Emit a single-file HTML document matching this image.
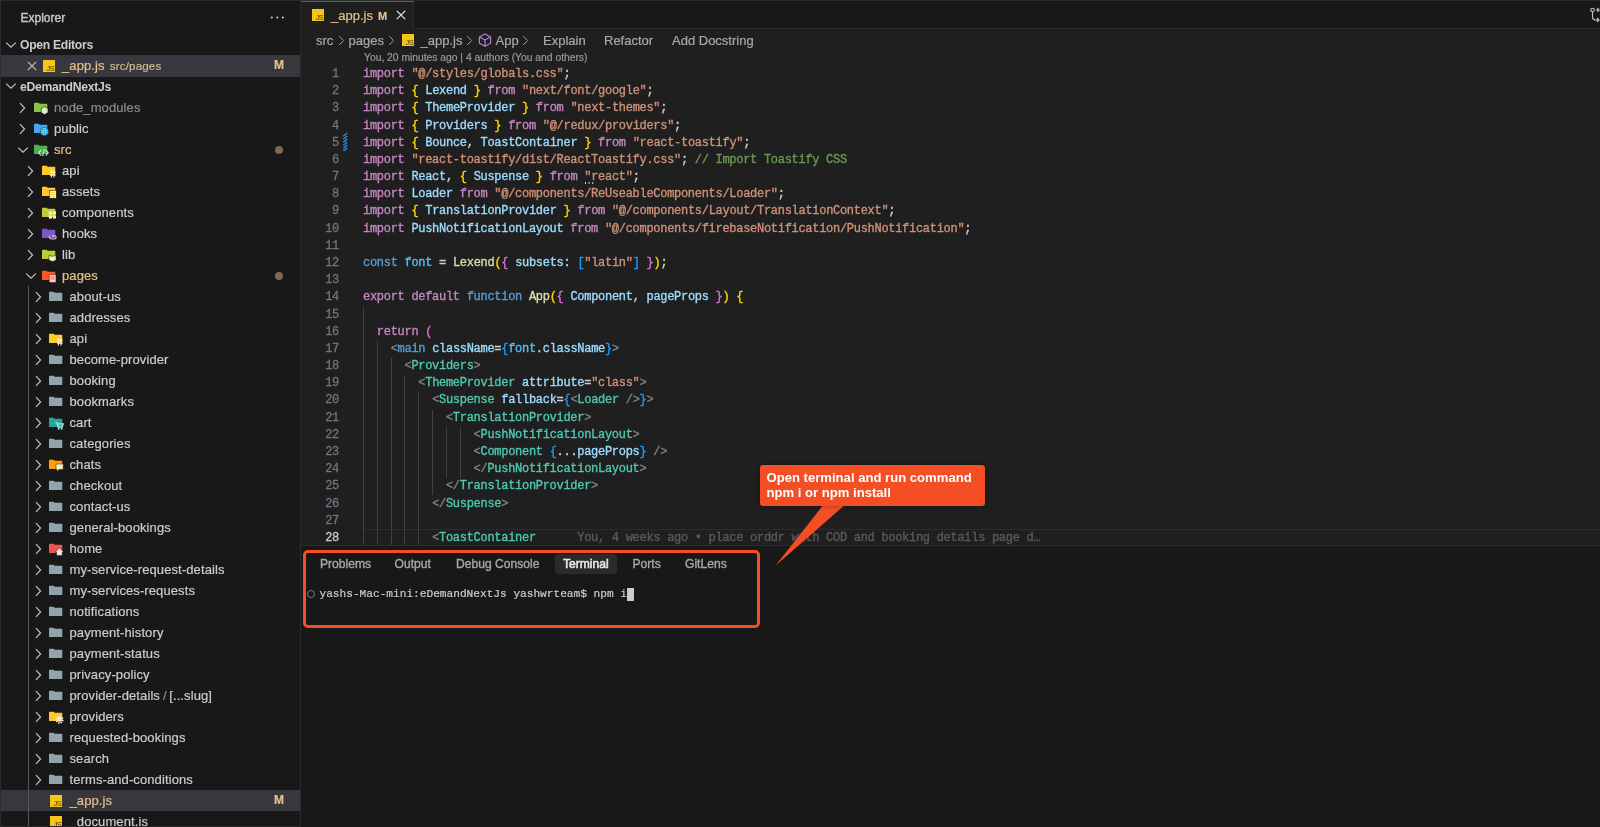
<!DOCTYPE html>
<html><head><meta charset="utf-8">
<style>
*{box-sizing:border-box;margin:0;padding:0}
html,body{width:1600px;height:827px;overflow:hidden;background:#181818;font-family:"Liberation Sans",sans-serif;-webkit-text-stroke:0.2px}
#sb{position:absolute;left:0;top:0;width:300px;height:827px;background:#181818;}
#sbl{position:absolute;left:0;top:0;width:1px;height:827px;background:#2b2b2b}
#sbb{position:absolute;left:300px;top:0;width:1px;height:827px;background:#2b2b2b}
.sb-title{position:absolute;left:20.5px;top:10px;font-size:12px;color:#cccccc;line-height:16px;-webkit-text-stroke:0.35px}
.sb-more{position:absolute;left:270px;top:9px;font-size:13px;color:#cccccc;letter-spacing:0px;font-weight:bold}
.row{position:absolute;left:0;width:300px;height:21px;}
.row.sel{background:#37373d}
.row .lbl{position:absolute;top:0px;line-height:21px;font-size:13px;color:#cccccc;white-space:nowrap;letter-spacing:0.1px}
.row.hdr .lbl, .row .hdr2{font-weight:bold;color:#cccccc;font-size:12.2px;letter-spacing:-0.3px;-webkit-text-stroke:0}
.lbl.mod{color:#e2c08d}
.lbl.dim{color:#8c8c8c}
.desc{font-size:11.7px;color:#d4b98a;margin-left:1.5px}
.sep{color:#8c8c8c;margin:0 2.5px 0 3px}
.chev{position:absolute;line-height:0}
.ic{position:absolute;line-height:0}
.x{position:absolute;top:0;line-height:21px;font-size:11px;color:#c5c5c5}
.M{position:absolute;left:274px;top:0;line-height:21px;font-size:12px;color:#e2c08d;font-weight:bold}
.dot{position:absolute;left:274.5px;top:6.5px;width:8px;height:8px;border-radius:50%;background:#7d6a4f}
.guide{position:absolute;width:1px;background:#585858}
#tabs{position:absolute;left:301px;top:0;width:1299px;height:29px;background:#181818;border-top:1px solid #2b2b2b;border-bottom:1px solid #2b2b2b}
#tab{position:absolute;left:301px;top:0;width:113px;height:29px;background:#1f1f1f;border-top:1px solid #2b2b2b;border-right:1px solid #2b2b2b}
#tabb{position:absolute;left:301px;top:1px;width:113px;height:1.2px;background:#0078d4}
#editor{position:absolute;left:301px;top:29px;width:1299px;height:516px;background:#1f1f1f}
.abs{position:absolute;white-space:nowrap}
.bc{font-size:13px;color:#a9a9a9;line-height:17px}
.ln{position:absolute;left:301px;width:38px;text-align:right;font-family:"Liberation Mono",monospace;font-size:12px;letter-spacing:-0.29px;line-height:17.18px;color:#6e7681;-webkit-text-stroke:0.3px}
.ln.act{color:#cccccc}
.cl{position:absolute;left:363px;font-family:"Liberation Mono",monospace;font-size:12px;letter-spacing:-0.29px;line-height:17.18px;white-space:pre;color:#cccccc;-webkit-text-stroke:0.35px}
.kw{color:#c586c0} .str{color:#ce9178} .var{color:#9cdcfe} .pun{color:#cccccc}
.b1{color:#ffd700} .b2{color:#da70d6} .b3{color:#179fff} .sto{color:#569cd6} .fn{color:#dcdcaa}
.tag{color:#4ec9b0} .cst{color:#4fc1ff} .gry{color:#808080} .cmt{color:#6a9955} .wht{color:#cccccc}
.blame{color:#5a5a5a}
.ig{position:absolute;width:1px;background:#404040}
#curline{position:absolute;left:363px;top:528.5px;width:1237px;height:17.5px;border-top:1.3px solid #2c2c2c;border-bottom:1px solid #2c2c2c}
#panel{position:absolute;left:301px;top:545px;width:1299px;height:282px;background:#181818;border-top:1.5px solid #2d2d2d}
.ptab{position:absolute;top:557px;font-size:12.1px;color:#a8a8a8;line-height:14px;-webkit-text-stroke:0.35px}
#ptact{position:absolute;left:555px;top:554px;width:62px;height:20px;background:#2b2b2b;border-radius:4px}
.term{position:absolute;left:319.5px;top:586px;font-family:"Liberation Mono",monospace;font-size:11.15px;line-height:16px;color:#cccccc;white-space:pre}
#annot{position:absolute;left:302.5px;top:550px;width:457px;height:78px;border:3.4px solid #f34e24;border-radius:5px}
#callout{position:absolute;left:760px;top:464.5px;width:225px;height:41px;background:#f34e24;border-radius:3px;box-shadow:0 0 4px rgba(0,0,0,0.35)}
.ctext{position:absolute;left:766.5px;top:469.5px;font-size:13.1px;line-height:15.5px;color:#ffffff;font-weight:bold;white-space:nowrap;-webkit-text-stroke:0}
</style></head><body><div id="root" style="position:absolute;left:0;top:0;width:1600px;height:827px;will-change:transform;background:#181818">
<div id="sb"><div class="sb-title">Explorer</div><svg style="position:absolute;left:268px;top:14px" width="18" height="6" viewBox="0 0 18 6"><circle cx="3.8" cy="3.5" r="1.05" fill="#cccccc"/><circle cx="9.3" cy="3.5" r="1.05" fill="#cccccc"/><circle cx="14.8" cy="3.5" r="1.05" fill="#cccccc"/></svg><div class="row hdr" style="top:34.5px"><span class="chev" style="left:5px;top:6px"><svg width="12" height="8" viewBox="0 0 12 8"><path d="M1.2 1.6 L6 6.2 L10.8 1.6" fill="none" stroke="#c5c5c5" stroke-width="1.15"/></svg></span><span class="lbl" style="left:20px">Open Editors</span></div><div class="row sel" style="top:55px;height:21.6px"><span class="ic" style="left:26.5px;top:6px"><svg width="10" height="10" viewBox="0 0 10 10"><path d="M0.8 0.8 L9.2 9.2 M9.2 0.8 L0.8 9.2" stroke="#c5c5c5" stroke-width="1.1"/></svg></span><span class="ic" style="left:43px;top:4.5px"><svg width="12" height="12" viewBox="0 0 12 12"><rect x="0" y="0" width="12" height="12" fill="#f5c518"/><text x="11.4" y="11.2" font-family="Liberation Sans" font-size="7.4" fill="#4a3a00" text-anchor="end" letter-spacing="-0.4" style="-webkit-text-stroke:0">JS</text></svg></span><span class="lbl mod" style="left:62px">_app.js <span class="desc">src/pages</span></span><span class="M">M</span></div><div class="row" style="top:76px"><span class="chev" style="left:5px;top:6px"><svg width="12" height="8" viewBox="0 0 12 8"><path d="M1.2 1.6 L6 6.2 L10.8 1.6" fill="none" stroke="#c5c5c5" stroke-width="1.15"/></svg></span><span class="lbl hdr2" style="left:20px;top:1px">eDemandNextJs</span></div><div class="row" style="top:97px"><span class="chev" style="left:18px;top:4.5px"><svg width="8" height="12" viewBox="0 0 8 12"><path d="M2 1.2 L6.6 6 L2 10.8" fill="none" stroke="#c5c5c5" stroke-width="1.15"/></svg></span><span class="ic" style="left:33px;top:4.3px"><svg width="16" height="14" viewBox="0 0 16 14"><path d="M1 2.4 Q1 1.8 1.6 1.8 L5.6 1.8 L6.7 2.8 L13.7 2.8 Q14.3 2.8 14.3 3.4 L14.3 10.5 Q14.3 11.1 13.7 11.1 L1.6 11.1 Q1 11.1 1 10.5 Z" fill="#8bc34a"/><path d="M11.6 5.6 L15 7.6 L15 11.6 L11.6 13.6 L8.2 11.6 L8.2 7.6 Z" fill="#dcedc8" stroke="#181818" stroke-width="0.6"/></svg></span><span class="lbl dim" style="left:54px">node_modules</span></div><div class="row" style="top:118px"><span class="chev" style="left:18px;top:4.5px"><svg width="8" height="12" viewBox="0 0 8 12"><path d="M2 1.2 L6.6 6 L2 10.8" fill="none" stroke="#c5c5c5" stroke-width="1.15"/></svg></span><span class="ic" style="left:33px;top:4.3px"><svg width="16" height="14" viewBox="0 0 16 14"><path d="M1 2.4 Q1 1.8 1.6 1.8 L5.6 1.8 L6.7 2.8 L13.7 2.8 Q14.3 2.8 14.3 3.4 L14.3 10.5 Q14.3 11.1 13.7 11.1 L1.6 11.1 Q1 11.1 1 10.5 Z" fill="#42a5f5"/><circle cx="11.4" cy="9.4" r="4" fill="#bbdefb" stroke="#181818" stroke-width="0.6"/><path d="M7.4 9.4 H15.4 M11.4 5.4 V13.4 M9.4 6 Q8.2 9.4 9.4 12.8 M13.4 6 Q14.6 9.4 13.4 12.8 M8 7.5 H14.8 M8 11.3 H14.8" stroke="#03a9f4" stroke-width="0.7" fill="none"/></svg></span><span class="lbl" style="left:54px">public</span></div><div class="row" style="top:139px"><span class="chev" style="left:16.8px;top:6.5px"><svg width="12" height="8" viewBox="0 0 12 8"><path d="M1.2 1.6 L6 6.2 L10.8 1.6" fill="none" stroke="#c5c5c5" stroke-width="1.15"/></svg></span><span class="ic" style="left:33px;top:4.3px"><svg width="16" height="14" viewBox="0 0 16 14"><path d="M1 2.4 Q1 1.8 1.6 1.8 L5.6 1.8 L6.7 2.8 L13.7 2.8 Q14.3 2.8 14.3 3.4 L14.3 10.5 Q14.3 11.1 13.7 11.1 L1.6 11.1 Q1 11.1 1 10.5 Z" fill="#4caf50"/><path d="M8.2 7 L5.6 9.8 L8.2 12.6 M12.6 7 L15.2 9.8 L12.6 12.6 M11.4 6.2 L9.6 13.2" stroke="#c8e6c9" stroke-width="1.2" fill="none"/></svg></span><span class="lbl mod" style="left:54px">src</span><span class="dot"></span></div><div class="row" style="top:160px"><span class="chev" style="left:25.8px;top:4.5px"><svg width="8" height="12" viewBox="0 0 8 12"><path d="M2 1.2 L6.6 6 L2 10.8" fill="none" stroke="#c5c5c5" stroke-width="1.15"/></svg></span><span class="ic" style="left:40.8px;top:4.3px"><svg width="16" height="14" viewBox="0 0 16 14"><path d="M1 2.4 Q1 1.8 1.6 1.8 L5.6 1.8 L6.7 2.8 L13.7 2.8 Q14.3 2.8 14.3 3.4 L14.3 10.5 Q14.3 11.1 13.7 11.1 L1.6 11.1 Q1 11.1 1 10.5 Z" fill="#ffca28"/><path d="M9 8.2 L14.6 8.2 M9 11.2 L14.6 11.2 M10.4 6 L10.4 13.6 M13 6 L13 13.6" stroke="#fff3d6" stroke-width="1.1"/></svg></span><span class="lbl" style="left:62px">api</span></div><div class="row" style="top:181px"><span class="chev" style="left:25.8px;top:4.5px"><svg width="8" height="12" viewBox="0 0 8 12"><path d="M2 1.2 L6.6 6 L2 10.8" fill="none" stroke="#c5c5c5" stroke-width="1.15"/></svg></span><span class="ic" style="left:40.8px;top:4.3px"><svg width="16" height="14" viewBox="0 0 16 14"><path d="M1 2.4 Q1 1.8 1.6 1.8 L5.6 1.8 L6.7 2.8 L13.7 2.8 Q14.3 2.8 14.3 3.4 L14.3 10.5 Q14.3 11.1 13.7 11.1 L1.6 11.1 Q1 11.1 1 10.5 Z" fill="#ffca28"/><rect x="8.4" y="5.6" width="6.8" height="7.6" fill="#fff3d6" stroke="#181818" stroke-width="0.5"/><path d="M9.6 7.4 H14 M9.6 9.4 H14 M9.6 11.4 H14" stroke="#ffca28" stroke-width="0.9"/></svg></span><span class="lbl" style="left:62px">assets</span></div><div class="row" style="top:202px"><span class="chev" style="left:25.8px;top:4.5px"><svg width="8" height="12" viewBox="0 0 8 12"><path d="M2 1.2 L6.6 6 L2 10.8" fill="none" stroke="#c5c5c5" stroke-width="1.15"/></svg></span><span class="ic" style="left:40.8px;top:4.3px"><svg width="16" height="14" viewBox="0 0 16 14"><path d="M1 2.4 Q1 1.8 1.6 1.8 L5.6 1.8 L6.7 2.8 L13.7 2.8 Q14.3 2.8 14.3 3.4 L14.3 10.5 Q14.3 11.1 13.7 11.1 L1.6 11.1 Q1 11.1 1 10.5 Z" fill="#c0ca33"/><rect x="7.8" y="5.4" width="3.2" height="3.2" fill="#f0f4c3"/><rect x="11.8" y="5.4" width="3.2" height="3.2" fill="#f0f4c3"/><rect x="7.8" y="9.4" width="3.2" height="3.2" fill="#f0f4c3"/><rect x="11.8" y="9.4" width="3.2" height="3.2" fill="#f0f4c3"/></svg></span><span class="lbl" style="left:62px">components</span></div><div class="row" style="top:223px"><span class="chev" style="left:25.8px;top:4.5px"><svg width="8" height="12" viewBox="0 0 8 12"><path d="M2 1.2 L6.6 6 L2 10.8" fill="none" stroke="#c5c5c5" stroke-width="1.15"/></svg></span><span class="ic" style="left:40.8px;top:4.3px"><svg width="16" height="14" viewBox="0 0 16 14"><path d="M1 2.4 Q1 1.8 1.6 1.8 L5.6 1.8 L6.7 2.8 L13.7 2.8 Q14.3 2.8 14.3 3.4 L14.3 10.5 Q14.3 11.1 13.7 11.1 L1.6 11.1 Q1 11.1 1 10.5 Z" fill="#7e57c2"/><path d="M8.4 8.6 Q7.6 12 11 12 L13 12 Q15.6 12 15 9.6 Q14.4 8.2 12.4 9 M11.2 8.2 L12.6 9 L11.6 10.4" stroke="#d1c4e9" stroke-width="1.1" fill="none"/></svg></span><span class="lbl" style="left:62px">hooks</span></div><div class="row" style="top:244px"><span class="chev" style="left:25.8px;top:4.5px"><svg width="8" height="12" viewBox="0 0 8 12"><path d="M2 1.2 L6.6 6 L2 10.8" fill="none" stroke="#c5c5c5" stroke-width="1.15"/></svg></span><span class="ic" style="left:40.8px;top:4.3px"><svg width="16" height="14" viewBox="0 0 16 14"><path d="M1 2.4 Q1 1.8 1.6 1.8 L5.6 1.8 L6.7 2.8 L13.7 2.8 Q14.3 2.8 14.3 3.4 L14.3 10.5 Q14.3 11.1 13.7 11.1 L1.6 11.1 Q1 11.1 1 10.5 Z" fill="#c0ca33"/><path d="M8 7.2 L11.5 8.4 L15 7.2 L15 12.2 L11.5 13.4 L8 12.2 Z" fill="#f0f4c3" stroke="#181818" stroke-width="0.5"/></svg></span><span class="lbl" style="left:62px">lib</span></div><div class="row" style="top:265px"><span class="chev" style="left:24.6px;top:6.5px"><svg width="12" height="8" viewBox="0 0 12 8"><path d="M1.2 1.6 L6 6.2 L10.8 1.6" fill="none" stroke="#c5c5c5" stroke-width="1.15"/></svg></span><span class="ic" style="left:40.8px;top:4.3px"><svg width="16" height="14" viewBox="0 0 16 14"><path d="M1 2.4 Q1 1.8 1.6 1.8 L5.6 1.8 L6.7 2.8 L13.7 2.8 Q14.3 2.8 14.3 3.4 L14.3 10.5 Q14.3 11.1 13.7 11.1 L1.6 11.1 Q1 11.1 1 10.5 Z" fill="#ff5722"/><rect x="8.2" y="5.6" width="6.8" height="8" rx="0.8" fill="#ffccbc" stroke="#181818" stroke-width="0.5"/><path d="M9.6 8 H13.6 M9.6 10 H13.6" stroke="#ff5722" stroke-width="0.9"/></svg></span><span class="lbl mod" style="left:62px">pages</span><span class="dot"></span></div><div class="row" style="top:286px"><span class="chev" style="left:34px;top:4.5px"><svg width="8" height="12" viewBox="0 0 8 12"><path d="M2 1.2 L6.6 6 L2 10.8" fill="none" stroke="#c5c5c5" stroke-width="1.15"/></svg></span><span class="ic" style="left:48.3px;top:4.3px"><svg width="16" height="14" viewBox="0 0 16 14"><path d="M1 2.4 Q1 1.8 1.6 1.8 L5.6 1.8 L6.7 2.8 L13.7 2.8 Q14.3 2.8 14.3 3.4 L14.3 10.5 Q14.3 11.1 13.7 11.1 L1.6 11.1 Q1 11.1 1 10.5 Z" fill="#90a4ae"/></svg></span><span class="lbl" style="left:69.5px">about-us</span></div><div class="row" style="top:307px"><span class="chev" style="left:34px;top:4.5px"><svg width="8" height="12" viewBox="0 0 8 12"><path d="M2 1.2 L6.6 6 L2 10.8" fill="none" stroke="#c5c5c5" stroke-width="1.15"/></svg></span><span class="ic" style="left:48.3px;top:4.3px"><svg width="16" height="14" viewBox="0 0 16 14"><path d="M1 2.4 Q1 1.8 1.6 1.8 L5.6 1.8 L6.7 2.8 L13.7 2.8 Q14.3 2.8 14.3 3.4 L14.3 10.5 Q14.3 11.1 13.7 11.1 L1.6 11.1 Q1 11.1 1 10.5 Z" fill="#90a4ae"/></svg></span><span class="lbl" style="left:69.5px">addresses</span></div><div class="row" style="top:328px"><span class="chev" style="left:34px;top:4.5px"><svg width="8" height="12" viewBox="0 0 8 12"><path d="M2 1.2 L6.6 6 L2 10.8" fill="none" stroke="#c5c5c5" stroke-width="1.15"/></svg></span><span class="ic" style="left:48.3px;top:4.3px"><svg width="16" height="14" viewBox="0 0 16 14"><path d="M1 2.4 Q1 1.8 1.6 1.8 L5.6 1.8 L6.7 2.8 L13.7 2.8 Q14.3 2.8 14.3 3.4 L14.3 10.5 Q14.3 11.1 13.7 11.1 L1.6 11.1 Q1 11.1 1 10.5 Z" fill="#ffca28"/><path d="M9 8.2 L14.6 8.2 M9 11.2 L14.6 11.2 M10.4 6 L10.4 13.6 M13 6 L13 13.6" stroke="#fff3d6" stroke-width="1.1"/></svg></span><span class="lbl" style="left:69.5px">api</span></div><div class="row" style="top:349px"><span class="chev" style="left:34px;top:4.5px"><svg width="8" height="12" viewBox="0 0 8 12"><path d="M2 1.2 L6.6 6 L2 10.8" fill="none" stroke="#c5c5c5" stroke-width="1.15"/></svg></span><span class="ic" style="left:48.3px;top:4.3px"><svg width="16" height="14" viewBox="0 0 16 14"><path d="M1 2.4 Q1 1.8 1.6 1.8 L5.6 1.8 L6.7 2.8 L13.7 2.8 Q14.3 2.8 14.3 3.4 L14.3 10.5 Q14.3 11.1 13.7 11.1 L1.6 11.1 Q1 11.1 1 10.5 Z" fill="#90a4ae"/></svg></span><span class="lbl" style="left:69.5px">become-provider</span></div><div class="row" style="top:370px"><span class="chev" style="left:34px;top:4.5px"><svg width="8" height="12" viewBox="0 0 8 12"><path d="M2 1.2 L6.6 6 L2 10.8" fill="none" stroke="#c5c5c5" stroke-width="1.15"/></svg></span><span class="ic" style="left:48.3px;top:4.3px"><svg width="16" height="14" viewBox="0 0 16 14"><path d="M1 2.4 Q1 1.8 1.6 1.8 L5.6 1.8 L6.7 2.8 L13.7 2.8 Q14.3 2.8 14.3 3.4 L14.3 10.5 Q14.3 11.1 13.7 11.1 L1.6 11.1 Q1 11.1 1 10.5 Z" fill="#90a4ae"/></svg></span><span class="lbl" style="left:69.5px">booking</span></div><div class="row" style="top:391px"><span class="chev" style="left:34px;top:4.5px"><svg width="8" height="12" viewBox="0 0 8 12"><path d="M2 1.2 L6.6 6 L2 10.8" fill="none" stroke="#c5c5c5" stroke-width="1.15"/></svg></span><span class="ic" style="left:48.3px;top:4.3px"><svg width="16" height="14" viewBox="0 0 16 14"><path d="M1 2.4 Q1 1.8 1.6 1.8 L5.6 1.8 L6.7 2.8 L13.7 2.8 Q14.3 2.8 14.3 3.4 L14.3 10.5 Q14.3 11.1 13.7 11.1 L1.6 11.1 Q1 11.1 1 10.5 Z" fill="#90a4ae"/></svg></span><span class="lbl" style="left:69.5px">bookmarks</span></div><div class="row" style="top:412px"><span class="chev" style="left:34px;top:4.5px"><svg width="8" height="12" viewBox="0 0 8 12"><path d="M2 1.2 L6.6 6 L2 10.8" fill="none" stroke="#c5c5c5" stroke-width="1.15"/></svg></span><span class="ic" style="left:48.3px;top:4.3px"><svg width="16" height="14" viewBox="0 0 16 14"><path d="M1 2.4 Q1 1.8 1.6 1.8 L5.6 1.8 L6.7 2.8 L13.7 2.8 Q14.3 2.8 14.3 3.4 L14.3 10.5 Q14.3 11.1 13.7 11.1 L1.6 11.1 Q1 11.1 1 10.5 Z" fill="#26a69a"/><path d="M7.4 6.6 L9 6.6 L10.1 11 L14.2 11 L15.2 7.8 L9.4 7.8" stroke="#b2dfdb" stroke-width="1.3" fill="none"/><circle cx="10.6" cy="12.8" r="1" fill="#b2dfdb"/><circle cx="13.6" cy="12.8" r="1" fill="#b2dfdb"/></svg></span><span class="lbl" style="left:69.5px">cart</span></div><div class="row" style="top:433px"><span class="chev" style="left:34px;top:4.5px"><svg width="8" height="12" viewBox="0 0 8 12"><path d="M2 1.2 L6.6 6 L2 10.8" fill="none" stroke="#c5c5c5" stroke-width="1.15"/></svg></span><span class="ic" style="left:48.3px;top:4.3px"><svg width="16" height="14" viewBox="0 0 16 14"><path d="M1 2.4 Q1 1.8 1.6 1.8 L5.6 1.8 L6.7 2.8 L13.7 2.8 Q14.3 2.8 14.3 3.4 L14.3 10.5 Q14.3 11.1 13.7 11.1 L1.6 11.1 Q1 11.1 1 10.5 Z" fill="#90a4ae"/></svg></span><span class="lbl" style="left:69.5px">categories</span></div><div class="row" style="top:454px"><span class="chev" style="left:34px;top:4.5px"><svg width="8" height="12" viewBox="0 0 8 12"><path d="M2 1.2 L6.6 6 L2 10.8" fill="none" stroke="#c5c5c5" stroke-width="1.15"/></svg></span><span class="ic" style="left:48.3px;top:4.3px"><svg width="16" height="14" viewBox="0 0 16 14"><path d="M1 2.4 Q1 1.8 1.6 1.8 L5.6 1.8 L6.7 2.8 L13.7 2.8 Q14.3 2.8 14.3 3.4 L14.3 10.5 Q14.3 11.1 13.7 11.1 L1.6 11.1 Q1 11.1 1 10.5 Z" fill="#ffa000"/><path d="M8 6 H15.2 V11.4 H11 L9 13.4 V11.4 H8 Z" fill="#ffecb3" stroke="#181818" stroke-width="0.5"/></svg></span><span class="lbl" style="left:69.5px">chats</span></div><div class="row" style="top:475px"><span class="chev" style="left:34px;top:4.5px"><svg width="8" height="12" viewBox="0 0 8 12"><path d="M2 1.2 L6.6 6 L2 10.8" fill="none" stroke="#c5c5c5" stroke-width="1.15"/></svg></span><span class="ic" style="left:48.3px;top:4.3px"><svg width="16" height="14" viewBox="0 0 16 14"><path d="M1 2.4 Q1 1.8 1.6 1.8 L5.6 1.8 L6.7 2.8 L13.7 2.8 Q14.3 2.8 14.3 3.4 L14.3 10.5 Q14.3 11.1 13.7 11.1 L1.6 11.1 Q1 11.1 1 10.5 Z" fill="#90a4ae"/></svg></span><span class="lbl" style="left:69.5px">checkout</span></div><div class="row" style="top:496px"><span class="chev" style="left:34px;top:4.5px"><svg width="8" height="12" viewBox="0 0 8 12"><path d="M2 1.2 L6.6 6 L2 10.8" fill="none" stroke="#c5c5c5" stroke-width="1.15"/></svg></span><span class="ic" style="left:48.3px;top:4.3px"><svg width="16" height="14" viewBox="0 0 16 14"><path d="M1 2.4 Q1 1.8 1.6 1.8 L5.6 1.8 L6.7 2.8 L13.7 2.8 Q14.3 2.8 14.3 3.4 L14.3 10.5 Q14.3 11.1 13.7 11.1 L1.6 11.1 Q1 11.1 1 10.5 Z" fill="#90a4ae"/></svg></span><span class="lbl" style="left:69.5px">contact-us</span></div><div class="row" style="top:517px"><span class="chev" style="left:34px;top:4.5px"><svg width="8" height="12" viewBox="0 0 8 12"><path d="M2 1.2 L6.6 6 L2 10.8" fill="none" stroke="#c5c5c5" stroke-width="1.15"/></svg></span><span class="ic" style="left:48.3px;top:4.3px"><svg width="16" height="14" viewBox="0 0 16 14"><path d="M1 2.4 Q1 1.8 1.6 1.8 L5.6 1.8 L6.7 2.8 L13.7 2.8 Q14.3 2.8 14.3 3.4 L14.3 10.5 Q14.3 11.1 13.7 11.1 L1.6 11.1 Q1 11.1 1 10.5 Z" fill="#90a4ae"/></svg></span><span class="lbl" style="left:69.5px">general-bookings</span></div><div class="row" style="top:538px"><span class="chev" style="left:34px;top:4.5px"><svg width="8" height="12" viewBox="0 0 8 12"><path d="M2 1.2 L6.6 6 L2 10.8" fill="none" stroke="#c5c5c5" stroke-width="1.15"/></svg></span><span class="ic" style="left:48.3px;top:4.3px"><svg width="16" height="14" viewBox="0 0 16 14"><path d="M1 2.4 Q1 1.8 1.6 1.8 L5.6 1.8 L6.7 2.8 L13.7 2.8 Q14.3 2.8 14.3 3.4 L14.3 10.5 Q14.3 11.1 13.7 11.1 L1.6 11.1 Q1 11.1 1 10.5 Z" fill="#ef5350"/><path d="M7.2 10 L11.4 6 L15.6 10 L14.2 10 L14.2 13.4 L8.6 13.4 L8.6 10 Z" fill="#ffebee" stroke="#181818" stroke-width="0.5"/></svg></span><span class="lbl" style="left:69.5px">home</span></div><div class="row" style="top:559px"><span class="chev" style="left:34px;top:4.5px"><svg width="8" height="12" viewBox="0 0 8 12"><path d="M2 1.2 L6.6 6 L2 10.8" fill="none" stroke="#c5c5c5" stroke-width="1.15"/></svg></span><span class="ic" style="left:48.3px;top:4.3px"><svg width="16" height="14" viewBox="0 0 16 14"><path d="M1 2.4 Q1 1.8 1.6 1.8 L5.6 1.8 L6.7 2.8 L13.7 2.8 Q14.3 2.8 14.3 3.4 L14.3 10.5 Q14.3 11.1 13.7 11.1 L1.6 11.1 Q1 11.1 1 10.5 Z" fill="#90a4ae"/></svg></span><span class="lbl" style="left:69.5px">my-service-request-details</span></div><div class="row" style="top:580px"><span class="chev" style="left:34px;top:4.5px"><svg width="8" height="12" viewBox="0 0 8 12"><path d="M2 1.2 L6.6 6 L2 10.8" fill="none" stroke="#c5c5c5" stroke-width="1.15"/></svg></span><span class="ic" style="left:48.3px;top:4.3px"><svg width="16" height="14" viewBox="0 0 16 14"><path d="M1 2.4 Q1 1.8 1.6 1.8 L5.6 1.8 L6.7 2.8 L13.7 2.8 Q14.3 2.8 14.3 3.4 L14.3 10.5 Q14.3 11.1 13.7 11.1 L1.6 11.1 Q1 11.1 1 10.5 Z" fill="#90a4ae"/></svg></span><span class="lbl" style="left:69.5px">my-services-requests</span></div><div class="row" style="top:601px"><span class="chev" style="left:34px;top:4.5px"><svg width="8" height="12" viewBox="0 0 8 12"><path d="M2 1.2 L6.6 6 L2 10.8" fill="none" stroke="#c5c5c5" stroke-width="1.15"/></svg></span><span class="ic" style="left:48.3px;top:4.3px"><svg width="16" height="14" viewBox="0 0 16 14"><path d="M1 2.4 Q1 1.8 1.6 1.8 L5.6 1.8 L6.7 2.8 L13.7 2.8 Q14.3 2.8 14.3 3.4 L14.3 10.5 Q14.3 11.1 13.7 11.1 L1.6 11.1 Q1 11.1 1 10.5 Z" fill="#90a4ae"/></svg></span><span class="lbl" style="left:69.5px">notifications</span></div><div class="row" style="top:622px"><span class="chev" style="left:34px;top:4.5px"><svg width="8" height="12" viewBox="0 0 8 12"><path d="M2 1.2 L6.6 6 L2 10.8" fill="none" stroke="#c5c5c5" stroke-width="1.15"/></svg></span><span class="ic" style="left:48.3px;top:4.3px"><svg width="16" height="14" viewBox="0 0 16 14"><path d="M1 2.4 Q1 1.8 1.6 1.8 L5.6 1.8 L6.7 2.8 L13.7 2.8 Q14.3 2.8 14.3 3.4 L14.3 10.5 Q14.3 11.1 13.7 11.1 L1.6 11.1 Q1 11.1 1 10.5 Z" fill="#90a4ae"/></svg></span><span class="lbl" style="left:69.5px">payment-history</span></div><div class="row" style="top:643px"><span class="chev" style="left:34px;top:4.5px"><svg width="8" height="12" viewBox="0 0 8 12"><path d="M2 1.2 L6.6 6 L2 10.8" fill="none" stroke="#c5c5c5" stroke-width="1.15"/></svg></span><span class="ic" style="left:48.3px;top:4.3px"><svg width="16" height="14" viewBox="0 0 16 14"><path d="M1 2.4 Q1 1.8 1.6 1.8 L5.6 1.8 L6.7 2.8 L13.7 2.8 Q14.3 2.8 14.3 3.4 L14.3 10.5 Q14.3 11.1 13.7 11.1 L1.6 11.1 Q1 11.1 1 10.5 Z" fill="#90a4ae"/></svg></span><span class="lbl" style="left:69.5px">payment-status</span></div><div class="row" style="top:664px"><span class="chev" style="left:34px;top:4.5px"><svg width="8" height="12" viewBox="0 0 8 12"><path d="M2 1.2 L6.6 6 L2 10.8" fill="none" stroke="#c5c5c5" stroke-width="1.15"/></svg></span><span class="ic" style="left:48.3px;top:4.3px"><svg width="16" height="14" viewBox="0 0 16 14"><path d="M1 2.4 Q1 1.8 1.6 1.8 L5.6 1.8 L6.7 2.8 L13.7 2.8 Q14.3 2.8 14.3 3.4 L14.3 10.5 Q14.3 11.1 13.7 11.1 L1.6 11.1 Q1 11.1 1 10.5 Z" fill="#90a4ae"/></svg></span><span class="lbl" style="left:69.5px">privacy-policy</span></div><div class="row" style="top:685px"><span class="chev" style="left:34px;top:4.5px"><svg width="8" height="12" viewBox="0 0 8 12"><path d="M2 1.2 L6.6 6 L2 10.8" fill="none" stroke="#c5c5c5" stroke-width="1.15"/></svg></span><span class="ic" style="left:48.3px;top:4.3px"><svg width="16" height="14" viewBox="0 0 16 14"><path d="M1 2.4 Q1 1.8 1.6 1.8 L5.6 1.8 L6.7 2.8 L13.7 2.8 Q14.3 2.8 14.3 3.4 L14.3 10.5 Q14.3 11.1 13.7 11.1 L1.6 11.1 Q1 11.1 1 10.5 Z" fill="#90a4ae"/></svg></span><span class="lbl" style="left:69.5px">provider-details<span class="sep">/</span>[...slug]</span></div><div class="row" style="top:706px"><span class="chev" style="left:34px;top:4.5px"><svg width="8" height="12" viewBox="0 0 8 12"><path d="M2 1.2 L6.6 6 L2 10.8" fill="none" stroke="#c5c5c5" stroke-width="1.15"/></svg></span><span class="ic" style="left:48.3px;top:4.3px"><svg width="16" height="14" viewBox="0 0 16 14"><path d="M1 2.4 Q1 1.8 1.6 1.8 L5.6 1.8 L6.7 2.8 L13.7 2.8 Q14.3 2.8 14.3 3.4 L14.3 10.5 Q14.3 11.1 13.7 11.1 L1.6 11.1 Q1 11.1 1 10.5 Z" fill="#ffca28"/><circle cx="11.6" cy="9.8" r="3" fill="none" stroke="#fff8e1" stroke-width="2" stroke-dasharray="1.3 1"/><circle cx="11.6" cy="9.8" r="2" fill="#fff8e1"/><circle cx="11.6" cy="9.8" r="0.8" fill="#ffca28"/></svg></span><span class="lbl" style="left:69.5px">providers</span></div><div class="row" style="top:727px"><span class="chev" style="left:34px;top:4.5px"><svg width="8" height="12" viewBox="0 0 8 12"><path d="M2 1.2 L6.6 6 L2 10.8" fill="none" stroke="#c5c5c5" stroke-width="1.15"/></svg></span><span class="ic" style="left:48.3px;top:4.3px"><svg width="16" height="14" viewBox="0 0 16 14"><path d="M1 2.4 Q1 1.8 1.6 1.8 L5.6 1.8 L6.7 2.8 L13.7 2.8 Q14.3 2.8 14.3 3.4 L14.3 10.5 Q14.3 11.1 13.7 11.1 L1.6 11.1 Q1 11.1 1 10.5 Z" fill="#90a4ae"/></svg></span><span class="lbl" style="left:69.5px">requested-bookings</span></div><div class="row" style="top:748px"><span class="chev" style="left:34px;top:4.5px"><svg width="8" height="12" viewBox="0 0 8 12"><path d="M2 1.2 L6.6 6 L2 10.8" fill="none" stroke="#c5c5c5" stroke-width="1.15"/></svg></span><span class="ic" style="left:48.3px;top:4.3px"><svg width="16" height="14" viewBox="0 0 16 14"><path d="M1 2.4 Q1 1.8 1.6 1.8 L5.6 1.8 L6.7 2.8 L13.7 2.8 Q14.3 2.8 14.3 3.4 L14.3 10.5 Q14.3 11.1 13.7 11.1 L1.6 11.1 Q1 11.1 1 10.5 Z" fill="#90a4ae"/></svg></span><span class="lbl" style="left:69.5px">search</span></div><div class="row" style="top:769px"><span class="chev" style="left:34px;top:4.5px"><svg width="8" height="12" viewBox="0 0 8 12"><path d="M2 1.2 L6.6 6 L2 10.8" fill="none" stroke="#c5c5c5" stroke-width="1.15"/></svg></span><span class="ic" style="left:48.3px;top:4.3px"><svg width="16" height="14" viewBox="0 0 16 14"><path d="M1 2.4 Q1 1.8 1.6 1.8 L5.6 1.8 L6.7 2.8 L13.7 2.8 Q14.3 2.8 14.3 3.4 L14.3 10.5 Q14.3 11.1 13.7 11.1 L1.6 11.1 Q1 11.1 1 10.5 Z" fill="#90a4ae"/></svg></span><span class="lbl" style="left:69.5px">terms-and-conditions</span></div><div class="row sel" style="top:790px"><span class="ic" style="left:50.099999999999994px;top:4.5px"><svg width="12" height="12" viewBox="0 0 12 12"><rect x="0" y="0" width="12" height="12" fill="#f5c518"/><text x="11.4" y="11.2" font-family="Liberation Sans" font-size="7.4" fill="#4a3a00" text-anchor="end" letter-spacing="-0.4" style="-webkit-text-stroke:0">JS</text></svg></span><span class="lbl mod" style="left:69.5px">_app.js</span><span class="M">M</span></div><div class="row" style="top:811px"><span class="ic" style="left:50.099999999999994px;top:4.5px"><svg width="12" height="12" viewBox="0 0 12 12"><rect x="0" y="0" width="12" height="12" fill="#f5c518"/><text x="11.4" y="11.2" font-family="Liberation Sans" font-size="7.4" fill="#4a3a00" text-anchor="end" letter-spacing="-0.4" style="-webkit-text-stroke:0">JS</text></svg></span><span class="lbl" style="left:69.5px">_document.js</span></div><div class="guide" style="left:28px;top:286px;height:545px"></div></div><div id="sbl"></div>
<div id="sbb"></div><div class="abs" style="left:0;top:826px;width:300px;height:1px;background:#262626"></div><div class="abs" style="left:0;top:0;width:1600px;height:1px;background:#2b2b2b"></div>
<div id="tabs"></div>
<div id="tab"></div><div id="tabb"></div>
<div class="abs" style="left:312px;top:9px;line-height:0"><svg width="12" height="12" viewBox="0 0 12 12"><rect x="0" y="0" width="12" height="12" fill="#f5c518"/><text x="11.4" y="11.2" font-family="Liberation Sans" font-size="7.4" fill="#4a3a00" text-anchor="end" letter-spacing="-0.4" style="-webkit-text-stroke:0">JS</text></svg></div>
<div class="abs" style="left:331px;top:8.2px;font-size:13px;line-height:16px;color:#e2c08d">_app.js</div>
<div class="abs" style="left:378px;top:8px;font-size:11px;line-height:16px;color:#e2c08d;font-weight:bold">M</div>
<svg class="abs" style="left:395.5px;top:9.5px" width="10" height="10" viewBox="0 0 10 10"><path d="M0.8 0.8 L9.2 9.2 M9.2 0.8 L0.8 9.2" stroke="#e8e8e8" stroke-width="1.2"/></svg>
<div id="editor"></div>
<div class="abs bc" style="left:316px;top:32px">src</div>
<div class="abs" style="left:338px;top:35px;line-height:0"><svg width="7" height="11" viewBox="0 0 7 11"><path d="M1.2 1 L5.6 5.5 L1.2 10" fill="none" stroke="#a0a0a0" stroke-width="1"/></svg></div>
<div class="abs bc" style="left:348.5px;top:32px">pages</div>
<div class="abs" style="left:388px;top:35px;line-height:0"><svg width="7" height="11" viewBox="0 0 7 11"><path d="M1.2 1 L5.6 5.5 L1.2 10" fill="none" stroke="#a0a0a0" stroke-width="1"/></svg></div>
<div class="abs" style="left:401.5px;top:34px;line-height:0"><svg width="12" height="12" viewBox="0 0 12 12"><rect x="0" y="0" width="12" height="12" fill="#f5c518"/><text x="11.4" y="11.2" font-family="Liberation Sans" font-size="7.4" fill="#4a3a00" text-anchor="end" letter-spacing="-0.4" style="-webkit-text-stroke:0">JS</text></svg></div>
<div class="abs bc" style="left:420.5px;top:32px">_app.js</div>
<div class="abs" style="left:466px;top:35px;line-height:0"><svg width="7" height="11" viewBox="0 0 7 11"><path d="M1.2 1 L5.6 5.5 L1.2 10" fill="none" stroke="#a0a0a0" stroke-width="1"/></svg></div>
<div class="abs" style="left:478px;top:32.5px;line-height:0"><svg width="14" height="14" viewBox="0 0 14 14"><path d="M7 1 L12.6 4 L12.6 10.2 L7 13.2 L1.4 10.2 L1.4 4 Z M1.4 4 L7 7 L12.6 4 M7 7 L7 13.2" fill="none" stroke="#b180d7" stroke-width="1.2" stroke-linejoin="round"/></svg></div>
<div class="abs bc" style="left:495.5px;top:32px">App</div>
<div class="abs" style="left:522px;top:35px;line-height:0"><svg width="7" height="11" viewBox="0 0 7 11"><path d="M1.2 1 L5.6 5.5 L1.2 10" fill="none" stroke="#a0a0a0" stroke-width="1"/></svg></div>
<div class="abs bc" style="left:543px;top:32px">Explain</div>
<div class="abs bc" style="left:604px;top:32px">Refactor</div>
<div class="abs bc" style="left:672px;top:32px">Add Docstring</div>
<div class="abs" style="left:364px;top:51.5px;font-size:10.3px;line-height:12px;color:#999999">You, 20 minutes ago | 4 authors (You and others)</div>
<div id="curline"></div>
<div class="ln" style="top:66.00px">1</div><div class="cl" style="top:66.00px"><span class="kw">import</span><span class="wht"> </span><span class="str">&quot;@/styles/globals.css&quot;</span><span class="pun">;</span></div><div class="ln" style="top:83.18px">2</div><div class="cl" style="top:83.18px"><span class="kw">import</span><span class="wht"> </span><span class="b1">{</span><span class="wht"> </span><span class="var">Lexend</span><span class="wht"> </span><span class="b1">}</span><span class="wht"> </span><span class="kw">from</span><span class="wht"> </span><span class="str">&quot;next/font/google&quot;</span><span class="pun">;</span></div><div class="ln" style="top:100.36px">3</div><div class="cl" style="top:100.36px"><span class="kw">import</span><span class="wht"> </span><span class="b1">{</span><span class="wht"> </span><span class="var">ThemeProvider</span><span class="wht"> </span><span class="b1">}</span><span class="wht"> </span><span class="kw">from</span><span class="wht"> </span><span class="str">&quot;next-themes&quot;</span><span class="pun">;</span></div><div class="ln" style="top:117.54px">4</div><div class="cl" style="top:117.54px"><span class="kw">import</span><span class="wht"> </span><span class="b1">{</span><span class="wht"> </span><span class="var">Providers</span><span class="wht"> </span><span class="b1">}</span><span class="wht"> </span><span class="kw">from</span><span class="wht"> </span><span class="str">&quot;@/redux/providers&quot;</span><span class="pun">;</span></div><div class="ln" style="top:134.72px">5</div><div class="cl" style="top:134.72px"><span class="kw">import</span><span class="wht"> </span><span class="b1">{</span><span class="wht"> </span><span class="var">Bounce</span><span class="pun">,</span><span class="wht"> </span><span class="var">ToastContainer</span><span class="wht"> </span><span class="b1">}</span><span class="wht"> </span><span class="kw">from</span><span class="wht"> </span><span class="str">&quot;react-toastify&quot;</span><span class="pun">;</span></div><div class="ln" style="top:151.90px">6</div><div class="cl" style="top:151.90px"><span class="kw">import</span><span class="wht"> </span><span class="str">&quot;react-toastify/dist/ReactToastify.css&quot;</span><span class="pun">;</span><span class="wht"> </span><span class="cmt">// Import Toastify CSS</span></div><div class="ln" style="top:169.08px">7</div><div class="cl" style="top:169.08px"><span class="kw">import</span><span class="wht"> </span><span class="var">React</span><span class="pun">,</span><span class="wht"> </span><span class="b1">{</span><span class="wht"> </span><span class="var">Suspense</span><span class="wht"> </span><span class="b1">}</span><span class="wht"> </span><span class="kw">from</span><span class="wht"> </span><span class="str">&quot;react&quot;</span><span class="pun">;</span></div><div class="ln" style="top:186.26px">8</div><div class="cl" style="top:186.26px"><span class="kw">import</span><span class="wht"> </span><span class="var">Loader</span><span class="wht"> </span><span class="kw">from</span><span class="wht"> </span><span class="str">&quot;@/components/ReUseableComponents/Loader&quot;</span><span class="pun">;</span></div><div class="ln" style="top:203.44px">9</div><div class="cl" style="top:203.44px"><span class="kw">import</span><span class="wht"> </span><span class="b1">{</span><span class="wht"> </span><span class="var">TranslationProvider</span><span class="wht"> </span><span class="b1">}</span><span class="wht"> </span><span class="kw">from</span><span class="wht"> </span><span class="str">&quot;@/components/Layout/TranslationContext&quot;</span><span class="pun">;</span></div><div class="ln" style="top:220.62px">10</div><div class="cl" style="top:220.62px"><span class="kw">import</span><span class="wht"> </span><span class="var">PushNotificationLayout</span><span class="wht"> </span><span class="kw">from</span><span class="wht"> </span><span class="str">&quot;@/components/firebaseNotification/PushNotification&quot;</span><span class="pun">;</span></div><div class="ln" style="top:237.80px">11</div><div class="cl" style="top:237.80px"></div><div class="ln" style="top:254.98px">12</div><div class="cl" style="top:254.98px"><span class="sto">const</span><span class="wht"> </span><span class="cst">font</span><span class="wht"> </span><span class="pun">=</span><span class="wht"> </span><span class="fn">Lexend</span><span class="b1">(</span><span class="b2">{</span><span class="wht"> </span><span class="var">subsets</span><span class="pun">:</span><span class="wht"> </span><span class="b3">[</span><span class="str">&quot;latin&quot;</span><span class="b3">]</span><span class="wht"> </span><span class="b2">}</span><span class="b1">)</span><span class="pun">;</span></div><div class="ln" style="top:272.16px">13</div><div class="cl" style="top:272.16px"></div><div class="ln" style="top:289.34px">14</div><div class="cl" style="top:289.34px"><span class="kw">export</span><span class="wht"> </span><span class="kw">default</span><span class="wht"> </span><span class="sto">function</span><span class="wht"> </span><span class="fn">App</span><span class="b1">(</span><span class="b2">{</span><span class="wht"> </span><span class="var">Component</span><span class="pun">,</span><span class="wht"> </span><span class="var">pageProps</span><span class="wht"> </span><span class="b2">}</span><span class="b1">)</span><span class="wht"> </span><span class="b1">{</span></div><div class="ln" style="top:306.52px">15</div><div class="cl" style="top:306.52px"></div><div class="ln" style="top:323.70px">16</div><div class="cl" style="top:323.70px"><span class="wht">  </span><span class="kw">return</span><span class="wht"> </span><span class="b2">(</span></div><div class="ln" style="top:340.88px">17</div><div class="cl" style="top:340.88px"><span class="wht">    </span><span class="gry">&lt;</span><span class="sto">main</span><span class="wht"> </span><span class="var">className</span><span class="pun">=</span><span class="b3">{</span><span class="cst">font</span><span class="pun">.</span><span class="var">className</span><span class="b3">}</span><span class="gry">&gt;</span></div><div class="ln" style="top:358.06px">18</div><div class="cl" style="top:358.06px"><span class="wht">      </span><span class="gry">&lt;</span><span class="tag">Providers</span><span class="gry">&gt;</span></div><div class="ln" style="top:375.24px">19</div><div class="cl" style="top:375.24px"><span class="wht">        </span><span class="gry">&lt;</span><span class="tag">ThemeProvider</span><span class="wht"> </span><span class="var">attribute</span><span class="pun">=</span><span class="str">&quot;class&quot;</span><span class="gry">&gt;</span></div><div class="ln" style="top:392.42px">20</div><div class="cl" style="top:392.42px"><span class="wht">          </span><span class="gry">&lt;</span><span class="tag">Suspense</span><span class="wht"> </span><span class="var">fallback</span><span class="pun">=</span><span class="b3">{</span><span class="gry">&lt;</span><span class="tag">Loader</span><span class="wht"> </span><span class="gry">/&gt;</span><span class="b3">}</span><span class="gry">&gt;</span></div><div class="ln" style="top:409.60px">21</div><div class="cl" style="top:409.60px"><span class="wht">            </span><span class="gry">&lt;</span><span class="tag">TranslationProvider</span><span class="gry">&gt;</span></div><div class="ln" style="top:426.78px">22</div><div class="cl" style="top:426.78px"><span class="wht">                </span><span class="gry">&lt;</span><span class="tag">PushNotificationLayout</span><span class="gry">&gt;</span></div><div class="ln" style="top:443.96px">23</div><div class="cl" style="top:443.96px"><span class="wht">                </span><span class="gry">&lt;</span><span class="tag">Component</span><span class="wht"> </span><span class="b3">{</span><span class="pun">...</span><span class="var">pageProps</span><span class="b3">}</span><span class="wht"> </span><span class="gry">/&gt;</span></div><div class="ln" style="top:461.14px">24</div><div class="cl" style="top:461.14px"><span class="wht">                </span><span class="gry">&lt;/</span><span class="tag">PushNotificationLayout</span><span class="gry">&gt;</span></div><div class="ln" style="top:478.32px">25</div><div class="cl" style="top:478.32px"><span class="wht">            </span><span class="gry">&lt;/</span><span class="tag">TranslationProvider</span><span class="gry">&gt;</span></div><div class="ln" style="top:495.50px">26</div><div class="cl" style="top:495.50px"><span class="wht">          </span><span class="gry">&lt;/</span><span class="tag">Suspense</span><span class="gry">&gt;</span></div><div class="ln" style="top:512.68px">27</div><div class="cl" style="top:512.68px"></div><div class="ln act" style="top:529.86px">28</div><div class="cl" style="top:529.86px"><span class="wht">          </span><span class="gry">&lt;</span><span class="tag">ToastContainer</span><span class="wht">      </span><span class="blame">You, 4 weeks ago • place orddr with COD and booking details page d…</span></div><div class="ig" style="left:363.00px;top:306.52px;height:240.52px"></div><div class="ig" style="left:376.82px;top:340.88px;height:206.16px"></div><div class="ig" style="left:390.64px;top:358.06px;height:188.98px"></div><div class="ig" style="left:404.46px;top:375.24px;height:171.80px"></div><div class="ig" style="left:418.28px;top:392.42px;height:154.62px"></div><div class="ig" style="left:432.10px;top:409.60px;height:85.90px"></div><div class="ig" style="left:445.92px;top:426.78px;height:51.54px"></div><div class="ig" style="left:459.74px;top:426.78px;height:51.54px"></div>
<div id="panel"></div>
<div id="ptact"></div>
<div class="ptab" style="left:320px">Problems</div>
<div class="ptab" style="left:394.5px">Output</div>
<div class="ptab" style="left:456px">Debug Console</div>
<div class="ptab" style="left:563px;color:#e7e7e7;-webkit-text-stroke:0.55px">Terminal</div>
<div class="ptab" style="left:632.5px">Ports</div>
<div class="ptab" style="left:685px">GitLens</div>
<div class="abs" style="left:307px;top:590px;width:8px;height:8px;border-radius:50%;border:1px solid #7a7a7a"></div>
<div class="term">yashs-Mac-mini:eDemandNextJs yashwrteam$ npm i</div>
<div class="abs" style="left:627px;top:588px;width:7px;height:13px;background:#cccccc"></div>
<div id="annot"></div>
<svg class="abs" style="left:0;top:0" width="1600" height="827"><path d="M824 504 L846 504 L775.6 565.6 Z" fill="#f34e24"/></svg>
<div id="callout"></div>
<div class="ctext">Open terminal and run command<br>npm i or npm install</div>
<svg class="abs" style="left:1588px;top:6px" width="12" height="18" viewBox="0 0 12 18"><circle cx="4.5" cy="4" r="1.8" fill="none" stroke="#c5c5c5" stroke-width="1.1"/><path d="M4.5 5.8 L4.5 11 Q4.5 14 7.5 14 L11 14 M9 12 L11 14 L9 16 M12 4 L9 4 M10.5 2.2 L8.8 4 L10.5 5.8" fill="none" stroke="#c5c5c5" stroke-width="1.1"/></svg>
<svg class="abs" style="left:342.8px;top:133px" width="5" height="18" viewBox="0 0 5 18"><path d="M0.2 3.2 L4.2 0.2 M0.2 6.2 L4.2 3.2 M0.2 9.2 L4.2 6.2 M0.2 12.2 L4.2 9.2 M0.2 15.2 L4.2 12.2 M0.2 18 L4.2 15.2" stroke="#268ae0" stroke-width="1.5"/></svg>
<div class="abs" style="left:584.5px;top:182px;width:1.7px;height:1.7px;background:#c8c8c8;box-shadow:3.6px 0 0 #c8c8c8,7.2px 0 0 #c8c8c8"></div>
</div></body></html>
